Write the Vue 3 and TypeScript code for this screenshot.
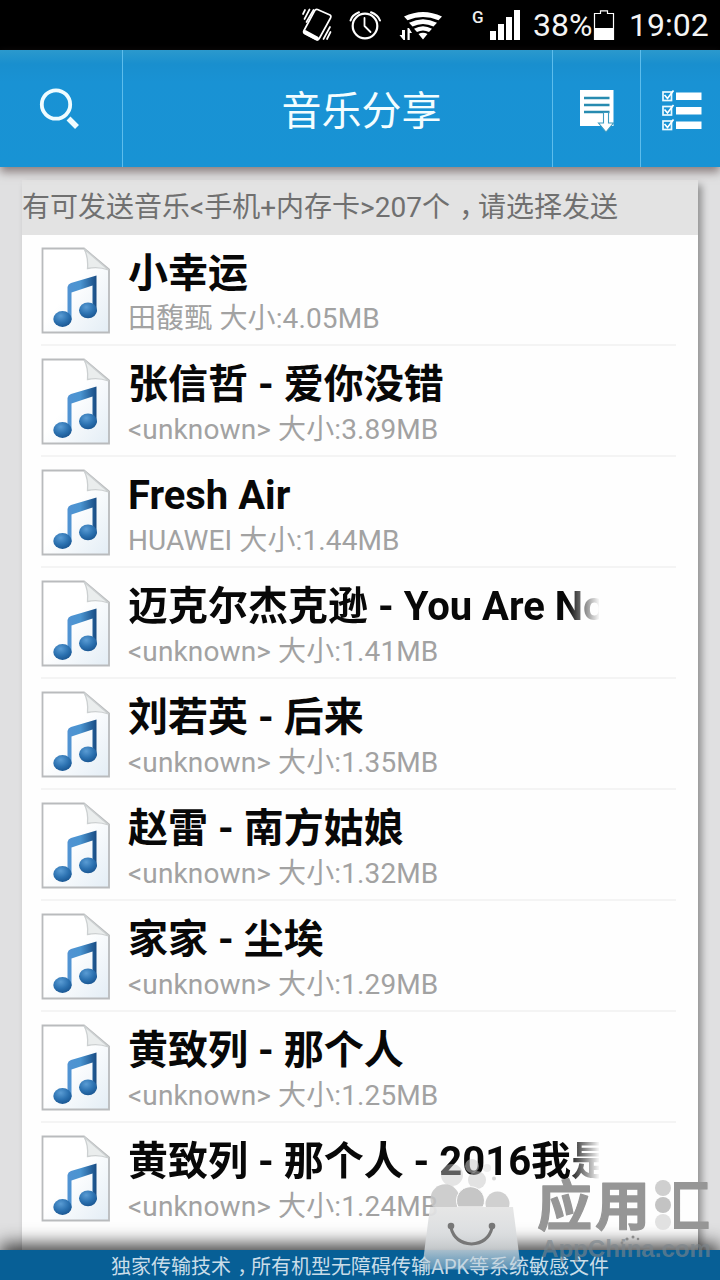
<script setup lang="ts">
interface Song {
  title: string
  artist: string
  size: string
}

const songs: Song[] = [
  { title: '小幸运', artist: '田馥甄', size: '4.05MB' },
  { title: '张信哲 - 爱你没错', artist: '<unknown>', size: '3.89MB' },
  { title: 'Fresh Air', artist: 'HUAWEI', size: '1.44MB' },
  { title: '迈克尔杰克逊 - You Are Not Alone', artist: '<unknown>', size: '1.41MB' },
  { title: '刘若英 - 后来', artist: '<unknown>', size: '1.35MB' },
  { title: '赵雷 - 南方姑娘', artist: '<unknown>', size: '1.32MB' },
  { title: '家家 - 尘埃', artist: '<unknown>', size: '1.29MB' },
  { title: '黄致列 - 那个人', artist: '<unknown>', size: '1.25MB' },
  { title: '黄致列 - 那个人 - 2016我是歌手', artist: '<unknown>', size: '1.24MB' },
]

const isLong = (s: Song): boolean => s.title.length > 14
const checkRows: number[] = [0, 14.5, 29]
</script>

<template>
  <div class="screen">
    <div class="status">
      <svg class="status-icons" width="235" height="50" viewBox="300 0 235 50">
        <g fill="none" stroke="#fff" stroke-width="1.7" stroke-linecap="round" stroke-linejoin="round">
          <path d="M317.5 9.5 L330 15 Q331.500 16 330.500 18 L319.500 38 Q318.500 40.500 316 39.500 L304.500 33.500 Q303 32.500 304 30.500 L314.500 11 Q315.500 9 317.500 9.500Z" />
          <path d="M305 10 L303 14 M309.500 9.500 L304.500 19 M313.500 10 L306.500 22 M330 27 L323.500 39 M330.500 32 L327 39" />
          <path d="M305 32 L317 38.500" stroke-width="4" />
          <circle cx="365" cy="26" r="12.300" stroke-width="2.200" />
          <path d="M364.500 18 V26 L370.500 32" stroke-width="1.800" />
          <path d="M350.500 20.500 Q352 15 359 12.300 M371 12.300 Q378 15 380 20.500" stroke-width="2" />
        </g>
        <path d="M404 16.500 Q423 7.500 442 16.500 L438.500 20.300 Q423 13.500 407.500 20.300Z M409 22.800 Q423 15.500 437 22.800 L433.500 26.600 Q423 21.200 412.500 26.600Z M414 28.800 Q423 23.500 432 28.800 L429 32 Q423 28.800 417 32Z M418.500 34 Q423 31.500 427.500 34 L423 39.500Z" fill="#fff" />
        <path d="M399.500 35 H402 V30 H405 V40 H403.500Z M407.500 40 V28 H409 L412 33 H409.700 V40Z" fill="#fff" />
        <path d="M490 31 h6 v9 h-6z M498 24 h6 v16 h-6z M506 17 h6 v23 h-6z M514 10 h6 v30 h-6z" fill="#fff" />
        <text class="network" x="472" y="23">G</text>
      </svg>
      <span class="percent">38%</span>
      <svg class="battery" width="22" height="50" viewBox="593 0 22 50">
        <path d="M594.500 39.500 V13.500 H600.500 V10.800 H607.500 V13.500 H613.500 V39.500Z" fill="none" stroke="#fff" stroke-width="1.200" />
        <rect x="594" y="28" width="20" height="12" fill="#fff" />
      </svg>
      <span class="clock">19:02</span>
    </div>

    <header class="bar">
      <div class="cell search">
        <svg width="44" height="44" viewBox="37 87 44 44" fill="none" stroke="#effcff">
          <circle cx="55" cy="104.500" r="14.200" stroke-width="3.800" />
          <path d="M67.500 118.500 L76 127" stroke-width="5.500" />
        </svg>
      </div>
      <h1 class="cell heading">音乐分享</h1>
      <div class="cell list-btn">
        <svg width="36" height="44" viewBox="579 90 36 44">
          <path d="M580 91 H613.500 V127 H580Z" fill="#fff" />
          <path d="M584 99 H609.500 M584 106 H609.500 M584 113 H609.500" stroke="#278bb0" stroke-width="2.400" />
          <path d="M603.500 113.500 h5 v10.500 h5 L606 133 L598.500 124 h5z" fill="#fff" stroke="#3c9bc0" stroke-width="1.100" />
        </svg>
      </div>
      <div class="cell check-btn">
        <svg width="42" height="42" viewBox="661 90 42 42">
          <g v-for="y in checkRows" :key="y" :transform="`translate(0 ${y})`">
            <rect x="663" y="92" width="8.500" height="8.500" fill="none" stroke="#e9faff" stroke-width="1.700" />
            <path d="M664.500 95 L667.500 98.500 L673.500 90.500" fill="none" stroke="#fff" stroke-width="1.700" />
            <rect x="676" y="92.500" width="25.500" height="7.500" fill="#fff" />
          </g>
        </svg>
      </div>
    </header>

    <main class="body">
      <section class="sheet">
        <p class="summary">有可发送音乐&lt;手机+内存卡&gt;207个<span class="comma">，</span>请选择发送</p>
        <ul class="songs">
          <li v-for="song in songs" :key="song.title" class="song">
            <svg class="file" width="70" height="88" viewBox="0 0 70 88">
              <defs>
                <linearGradient id="paper" x1="0" y1="0" x2="1" y2="1">
                  <stop offset="0.450" stop-color="#fff" />
                  <stop offset="1" stop-color="#e3edf5" />
                </linearGradient>
                <linearGradient id="note" x1="0" y1="0" x2="1" y2="0">
                  <stop offset="0" stop-color="#5193d3" />
                  <stop offset="0.450" stop-color="#4a94d0" />
                  <stop offset="1" stop-color="#174b83" />
                </linearGradient>
                <radialGradient id="head" cx="0.400" cy="0.300" r="0.700">
                  <stop offset="0" stop-color="#5a9cd4" />
                  <stop offset="0.600" stop-color="#2c72b1" />
                  <stop offset="1" stop-color="#1b5894" />
                </radialGradient>
              </defs>
              <path d="M1.500 1.500 H43 L68 22.500 V85.500 H1.500Z" fill="url(#paper)" stroke="#b9bbbd" stroke-width="1.800" />
              <path d="M43 1.800 Q47.500 10 46.500 21.500 Q57 19 67.500 23Z" fill="#eaeded" stroke="#ccd0d1" stroke-width="1.300" />
              <path d="M26.500 40 Q27 37 30 36 L55.500 28.500 V65 H51.500 V38.500 L30.500 45.500 V73 H26.500Z" fill="url(#note)" />
              <ellipse cx="21.500" cy="72" rx="9.200" ry="7.900" fill="url(#head)" />
              <ellipse cx="47" cy="63.300" rx="9" ry="7.900" fill="url(#head)" />
            </svg>
            <div class="info">
              <div class="title" :class="{ faded: isLong(song) }">{{ song.title }}</div>
              <div class="meta">{{ song.artist }} 大小:{{ song.size }}</div>
            </div>
          </li>
        </ul>
      </section>
    </main>

    <footer class="foot">独家传输技术<span class="comma">，</span>所有机型无障碍传输APK等系统敏感文件</footer>

    <svg class="watermark" width="300" height="125" viewBox="420 1155 300 125">
      <defs>
        <linearGradient id="bag" x1="0" y1="0" x2="0" y2="1">
          <stop offset="0" stop-color="#e5e5e5" stop-opacity="0.950" />
          <stop offset="0.650" stop-color="#d2d6d9" stop-opacity="0.850" />
          <stop offset="1" stop-color="#b9cedb" stop-opacity="0.450" />
        </linearGradient>
        <clipPath id="frame"><rect x="674" y="1170" width="46" height="70" /></clipPath>
      </defs>
      <g fill="#c6c6c6">
        <circle cx="452" cy="1175" r="11" fill-opacity="0.450" />
        <circle cx="472" cy="1166" r="7" fill-opacity="0.550" />
        <circle cx="477" cy="1180" r="9" fill-opacity="0.500" />
        <circle cx="487" cy="1168" r="4" fill-opacity="0.300" />
        <circle cx="494" cy="1178.500" r="2" fill-opacity="0.700" />
        <path d="M433 1207 A14.500 14.500 0 1 1 457 1207Z" fill-opacity="0.850" />
        <path d="M458 1207 A14 14 0 1 1 483 1207Z" stroke="#fff" stroke-width="1" />
        <path d="M486 1207 A12 12 0 1 1 509 1207Z" fill="#d0d0d0" />
      </g>
      <path d="M430 1207 H513 L521 1269.500 H422Z" fill="url(#bag)" />
      <path d="M451 1228 Q455 1243 471.500 1244 Q488 1243 492 1228" fill="none" stroke="#777" stroke-width="3" />
      <circle cx="451" cy="1226" r="3.300" fill="#777" />
      <circle cx="492" cy="1226" r="3.300" fill="#777" />
      <g class="brand">
        <text x="537" y="1226" textLength="55" lengthAdjust="spacingAndGlyphs">应</text>
        <text x="595" y="1226" textLength="55" lengthAdjust="spacingAndGlyphs">用</text>
        <text x="653" y="1226" textLength="57" lengthAdjust="spacingAndGlyphs" clip-path="url(#frame)">汇</text>
      </g>
      <g fill="#cfcfcf">
        <circle cx="663" cy="1188" r="8" />
        <circle cx="663" cy="1205" r="8" fill="#c3c3c3" />
        <circle cx="663" cy="1222" r="8" fill="#e1e1e1" />
      </g>
      <g fill="#8b8b8b">
        <circle cx="627" cy="1239" r="1.600" />
        <circle cx="633" cy="1237" r="1.500" />
        <circle cx="638" cy="1239" r="1.300" />
        <circle cx="622" cy="1243" r="1.400" />
      </g>
      <text class="domain" x="541" y="1257" textLength="170" lengthAdjust="spacingAndGlyphs">AppChina.com</text>
    </svg>
  </div>
</template>

<style>
body {
  margin: 0;
  overflow: hidden;
}
</style>

<style scoped>
.screen {
  position: relative;
  width: 720px;
  height: 1280px;
  display: flex;
  flex-direction: column;
  overflow: hidden;
  background: #e0e0e1;
  font-family: Roboto, "Noto Sans CJK SC", sans-serif;
}
.status {
  height: 50px;
  flex: none;
  display: flex;
  justify-content: flex-end;
  align-items: center;
  padding-right: 12px;
  background: #000;
  color: #f4f4f4;
  font-size: 32px;
  line-height: 52px;
  white-space: nowrap;
}
.status-icons {
  flex: none;
  margin-right: -2px;
}
.network {
  font: 500 17px Roboto, sans-serif;
  fill: #eee;
}
.percent {
  width: 60px;
}
.battery {
  flex: none;
}
.clock {
  width: 79px;
  margin-left: 14px;
}
.bar {
  height: 117px;
  flex: none;
  position: relative;
  z-index: 1;
  display: flex;
  background: linear-gradient(#2b99cd 0, #198fce 14px, #1992d4 32px, #1893d4 100%);
  box-shadow: 0 5px 9px rgba(90, 72, 72, 0.65);
}
.cell {
  box-sizing: border-box;
  border-right: 1.500px solid #5dbdec;
  display: flex;
  align-items: center;
  justify-content: center;
}
.search {
  width: 123px;
  padding-right: 3px;
}
.heading {
  width: 430px;
  margin: 0;
  padding: 6px 0 0 48px;
  color: #f3fdff;
  font-size: 40px;
  font-weight: 400;
  line-height: 60px;
}
.list-btn {
  width: 88px;
  padding-top: 5px;
}
.check-btn {
  width: 79px;
  padding-top: 4px;
  border-right: 0;
  padding-left: 3px;
}
.body {
  flex: 1;
  min-height: 0;
  padding: 13px 22px 0;
  background: #e0e0e1;
}
.sheet {
  height: 100%;
  background: #fefefe;
  box-shadow: 4px 5px 7px rgba(0, 0, 0, 0.35);
}
.summary {
  height: 55px;
  margin: 0;
  background: #e3e3e3;
  color: #707070;
  font-size: 28px;
  line-height: 56px;
  white-space: nowrap;
}
.comma {
  display: inline-block;
  width: 1em;
  text-indent: 0.32em;
}
.songs {
  list-style: none;
  margin: 0;
  padding: 0 22px 0 19px;
}
.song {
  box-sizing: border-box;
  height: 111px;
  display: flex;
  padding-top: 12px;
  border-bottom: 2px solid #f4f4f4;
}
.song:last-child {
  border-bottom: 0;
}
.file {
  flex: none;
  margin-right: 17px;
}
.info {
  width: 471px;
  padding-top: 2px;
}
.title {
  height: 50px;
  overflow: hidden;
  color: #080808;
  font-size: 40px;
  font-weight: 700;
  line-height: 50px;
  white-space: nowrap;
}
.faded {
  mask-image: linear-gradient(to right, #000 440px, transparent 472px);
}
.meta {
  color: #a2a2a2;
  font-size: 28px;
  line-height: 40px;
  letter-spacing: 0.120px;
  white-space: nowrap;
}
.foot {
  height: 30px;
  flex: none;
  position: relative;
  z-index: 1;
  background: #075f96;
  box-shadow: 0 -6px 18px rgba(0, 0, 0, 0.75);
  color: #c9dce8;
  font-size: 20px;
  line-height: 34px;
  text-align: center;
  white-space: nowrap;
}
.watermark {
  position: absolute;
  right: 0;
  bottom: 0;
  z-index: 2;
}
.brand {
  font: 700 54px "Noto Sans CJK SC", sans-serif;
  fill: #969696;
  stroke: #969696;
  stroke-width: 1.200px;
  stroke-linejoin: round;
}
.domain {
  font: 700 23px "Liberation Sans", sans-serif;
  fill: #7c858b;
  fill-opacity: 0.65;
}
</style>
